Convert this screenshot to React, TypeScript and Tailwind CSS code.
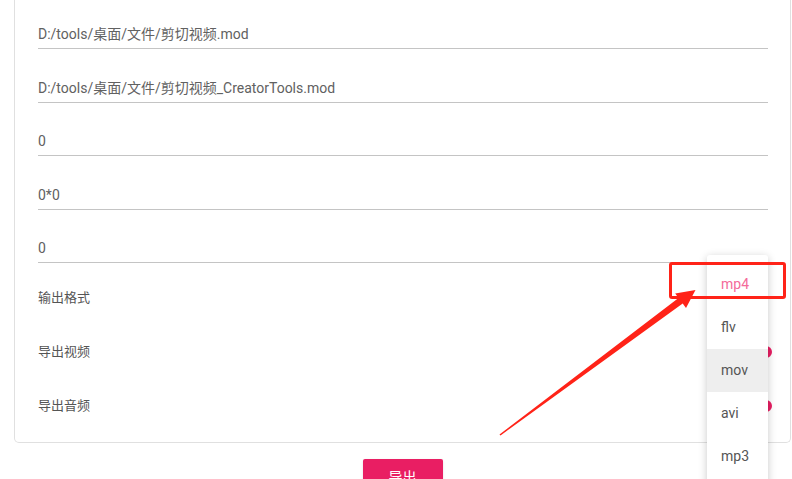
const font = { fontFamily: "Roboto, 'Noto Sans CJK SC', sans-serif" }

const fields = [
  'D:/tools/桌面/文件/剪切视频.mod',
  'D:/tools/桌面/文件/剪切视频_CreatorTools.mod',
  '0',
  '0*0',
  '0',
]

const formats = ['mp4', 'flv', 'mov', 'avi', 'mp3']

function Switch() {
  return (
    <div className="relative mr-[-4px] flex h-[14px] w-[34px] items-center">
      <div className="h-[10px] w-[30px] rounded-full bg-[#f8bbd0]" />
      <div className="absolute right-0 h-[12px] w-[12px] rounded-full bg-[#e91e63]" />
    </div>
  )
}

export default function App() {
  return (
    <div className="relative h-[479px] w-[792px] overflow-hidden bg-white" style={font}>
      {/* Settings card, top scrolled out of view */}
      <div className="ml-[14px] mr-[1px] rounded-b-[5px] border-x border-b border-[#e0e0e0] pb-[9px] pl-[23px] pr-[22px]">
        {fields.map((v, i) => (
          <div
            key={i}
            className={`flex items-end border-b border-[#c4c4c4] pb-[3px] text-[14px] text-[#616161] ${
              i === 0 ? 'h-[49px]' : 'h-[53.5px]'
            }`}
          >
            {v}
          </div>
        ))}

        <div className="mt-[8px]">
          <div className="flex h-[54px] items-center text-[13px] text-[#555]">输出格式</div>
          <div className="flex h-[54px] items-center justify-between text-[13px] text-[#555]">
            <span>导出视频</span>
            <Switch />
          </div>
          <div className="flex h-[54px] items-center justify-between text-[13px] text-[#555]">
            <span>导出音频</span>
            <Switch />
          </div>
        </div>
      </div>

      <div className="ml-[14px] mr-[1px] mt-[16px] flex justify-center">
        <button className="h-[36px] w-[80px] rounded-[2px] bg-[#e91e63] text-[14px] text-white shadow-sm">
          导出
        </button>
      </div>

      {/* Format dropdown */}
      <div className="absolute left-[707px] top-[255px] w-[61px] rounded-[3px] bg-white pb-[8px] pt-[8px] shadow-[0_2px_8px_rgba(0,0,0,0.22)]">
        {formats.map((f) => (
          <div
            key={f}
            className={`flex h-[43px] items-center pl-[14px] text-[14px] ${
              f === 'mp4' ? 'text-[#f46b9a]' : 'text-[#555]'
            } ${f === 'mov' ? 'bg-[#eeeeee]' : ''}`}
          >
            {f}
          </div>
        ))}
      </div>

      {/* Annotation */}
      <div className="absolute left-[669px] top-[262px] h-[37px] w-[117px] rounded-[3px] border-[3px] border-[#ff2318]" />
      <svg className="pointer-events-none absolute left-0 top-0" width="792" height="479">
        <polygon
          points="499.5,434.5 678.5,297.9 675.2,293.5 695.5,290 686,307.9 682.7,303.5 500.5,435.5"
          fill="#ff2318"
        />
      </svg>
    </div>
  )
}
